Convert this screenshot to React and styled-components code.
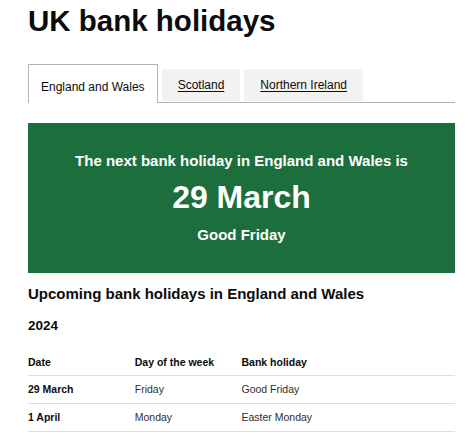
import React, { useState } from "react";
import styled, { createGlobalStyle } from "styled-components";

const GlobalStyle = createGlobalStyle`
  body {
    margin: 0;
    background: #ffffff;
    color: #0b0c0c;
    font-family: "Liberation Sans", Arial, sans-serif;
  }
`;

const Page = styled.main`
  width: 427px;
  padding: 0 0 0 28px;
`;

const Title = styled.h1`
  font-size: 29.5px;
  font-weight: bold;
  line-height: 1;
  margin: 0;
  padding-top: 6px;
`;

const TabList = styled.ul`
  list-style: none;
  margin: 28px 0 0;
  padding: 0;
  display: flex;
  align-items: flex-end;
  gap: 4px;
  border-bottom: 1px solid #b1b4b6;
`;

const Tab = styled.li`
  font-size: 12px;
  line-height: 16px;
  box-sizing: border-box;
  background: ${(props) => (props.$active ? "#ffffff" : "#f3f2f1")};
  border: ${(props) => (props.$active ? "1px solid #b1b4b6" : "none")};
  border-bottom: none;
  padding: ${(props) => (props.$active ? "14px 12px 8px" : "8px 16px 8px")};
  margin-bottom: ${(props) => (props.$active ? "-1px" : "1px")};
  height: ${(props) => (props.$active ? "39px" : "32px")};
  cursor: pointer;

  a {
    color: #0b0c0c;
    text-decoration: ${(props) => (props.$active ? "none" : "underline")};
    text-underline-offset: 2px;
  }
`;

const Panel = styled.section`
  margin-top: 20px;
  background: #1d6e3d;
  color: #ffffff;
  text-align: center;
  height: 150px;
  box-sizing: border-box;
  padding-top: 28px;
`;

const PanelLead = styled.p`
  margin: ${(props) => props.$gap || 0}px 0 0;
  font-size: 15px;
  font-weight: bold;
  line-height: 20px;
`;

const PanelDate = styled.p`
  margin: 8px 0 0;
  font-size: 32px;
  font-weight: bold;
  line-height: 36px;
`;

const SubHeading = styled.h2`
  margin: 11px 0 0;
  font-size: 15px;
  font-weight: bold;
  line-height: 20px;
`;

const Year = styled.h3`
  margin: 13px 0 0;
  font-size: 13.5px;
  font-weight: bold;
  line-height: 18px;
`;

const Table = styled.table`
  width: 100%;
  margin-top: 15px;
  border-collapse: collapse;
  font-size: 10.5px;
`;

const Cell = styled.td`
  text-align: left;
  padding: 0;
  height: 27px;
  vertical-align: middle;
  border-bottom: 1px solid #dcdcdc;
  font-weight: ${(props) => (props.$bold ? "bold" : "normal")};
  color: ${(props) => (props.$bold ? "#0b0c0c" : "#2e2e2e")};
  width: ${(props) => props.$width || "auto"};
`;

const HeadCell = styled(Cell).attrs({ as: "th" })`
  font-weight: bold;
  color: #0b0c0c;
  height: 25px;
`;

const nations = ["England and Wales", "Scotland", "Northern Ireland"];

const holidays = [
  { date: "29 March", day: "Friday", name: "Good Friday" },
  { date: "1 April", day: "Monday", name: "Easter Monday" },
];

export default function App() {
  const [selected, setSelected] = useState(0);

  return (
    <Page>
      <GlobalStyle />
      <Title>UK bank holidays</Title>
      <TabList>
        {nations.map((nation, i) => (
          <Tab key={nation} $active={i === selected} onClick={() => setSelected(i)}>
            <a>{nation}</a>
          </Tab>
        ))}
      </TabList>
      <Panel>
        <PanelLead>The next bank holiday in England and Wales is</PanelLead>
        <PanelDate>29 March</PanelDate>
        <PanelLead $gap={10}>Good Friday</PanelLead>
      </Panel>
      <SubHeading>Upcoming bank holidays in England and Wales</SubHeading>
      <Year>2024</Year>
      <Table>
        <thead>
          <tr>
            <HeadCell $width="25%">Date</HeadCell>
            <HeadCell $width="25%">Day of the week</HeadCell>
            <HeadCell>Bank holiday</HeadCell>
          </tr>
        </thead>
        <tbody>
          {holidays.map((h) => (
            <tr key={h.date}>
              <Cell $bold>{h.date}</Cell>
              <Cell>{h.day}</Cell>
              <Cell>{h.name}</Cell>
            </tr>
          ))}
        </tbody>
      </Table>
    </Page>
  );
}
